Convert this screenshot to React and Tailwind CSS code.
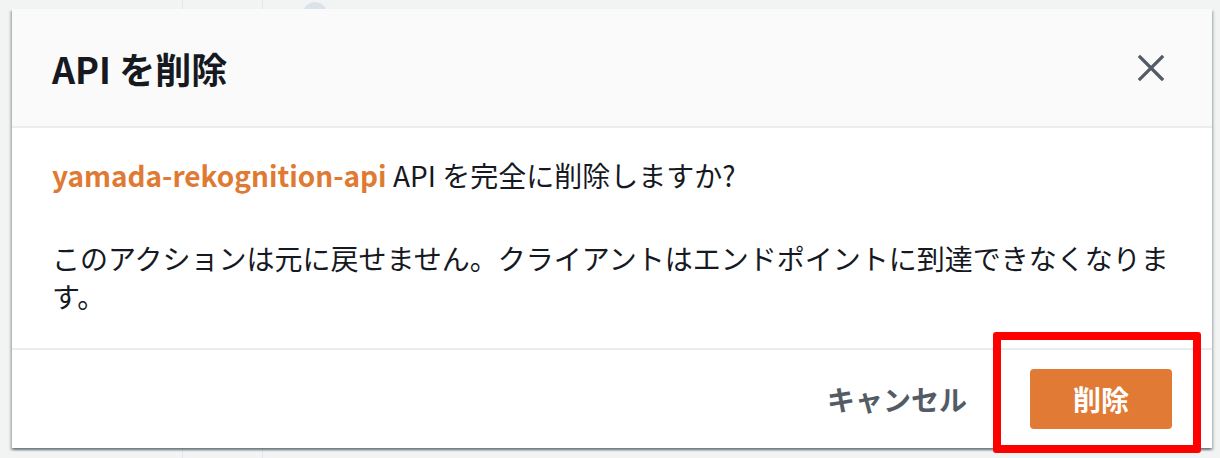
import React from 'react';

const font = { fontFamily: '"Noto Sans CJK JP", "Noto Sans", sans-serif' };

const CloseIcon = () => (
  <svg width="30" height="30" viewBox="0 0 30 30" fill="none">
    <path d="M4 4 L26 26 M26 4 L4 26" stroke="#545b64" strokeWidth="3.2" strokeLinecap="square" />
  </svg>
);

const App = () => {
  return (
    <div className="relative w-[1220px] h-[458px] bg-[#f2f3f3] overflow-hidden" style={font}>
      {/* page behind the modal */}
      <div className="absolute inset-0 flex">
        <div className="w-[78px] shrink-0" />
        <div className="w-[105px] shrink-0 border-r border-[#e4e7e7]" />
        <div className="w-[80px] shrink-0 border-r border-[#e4e7e7]" />
        <div className="pl-[40px] pt-[2px]">
          <div className="w-[24px] h-[24px] rounded-full bg-[#dbe3ea]" />
        </div>
      </div>

      {/* modal */}
      <div className="relative pt-[9px] pl-[12px] pr-[8px]">
        <div className="w-[1200px] bg-white shadow-[0_2px_2px_0_rgba(0,28,36,0.35),-2px_2px_2px_0_rgba(0,28,36,0.2),2px_2px_2px_0_rgba(0,28,36,0.15)]">
          {/* header */}
          <div className="h-[119px] flex items-center justify-between pl-[40px] pr-[46px] bg-[#fafafa] border-b-2 border-[#eaeded]">
            <h2 className="text-[36px] font-bold text-[#16191f] leading-none">API を削除</h2>
            <button className="p-0">
              <CloseIcon />
            </button>
          </div>

          {/* body */}
          <div className="pl-[40px] pr-[30px] pt-[28px] pb-[33px] text-[28px] leading-[38px] text-[#16191f] border-b-2 border-[#eaeded]">
            <p>
              <span className="font-bold text-[#e07a33]">yamada-rekognition-api</span> API を完全に削除しますか?
            </p>
            <p className="mt-[45px]">
              このアクションは元に戻せません。クライアントはエンドポイントに到達できなくなります。
            </p>
          </div>

          {/* footer */}
          <div className="h-[98px] flex items-center justify-end pr-[40px]">
            <button className="text-[28px] font-bold text-[#545b64] mr-[63px] leading-none">キャンセル</button>
            <button className="w-[142px] h-[60px] bg-[#e07a35] rounded-[4px] text-[28px] font-bold text-white leading-none flex items-center justify-center">
              削除
            </button>
          </div>
        </div>
      </div>

      {/* red highlight annotation */}
      <div className="absolute left-[993px] top-[332px] w-[208px] h-[121px] border-[8px] border-[#ff0000] rounded-[3px]" />
    </div>
  );
};

export default App;
